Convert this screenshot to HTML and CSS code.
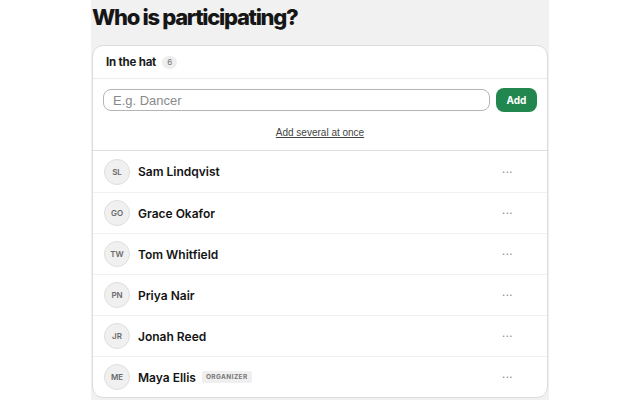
FILE: index.html
```html
<!DOCTYPE html>
<html>
<head>
<meta charset="utf-8">
<link rel="stylesheet" href="styles.css">
</head>
<body>
<main class="page">
  <h1 class="title">Who is participating?</h1>
  <section class="card">
    <header class="card-head">
      <span class="card-title">In the hat</span>
      <span class="count">6</span>
    </header>
    <div class="entry">
      <div class="entry-row">
        <input class="field" type="text" placeholder="E.g. Dancer">
        <button class="add">Add</button>
      </div>
      <a class="several" href="#">Add several at once</a>
    </div>
    <ul class="list">
      <li class="person"><span class="avatar">SL</span><span class="name">Sam Lindqvist</span><span class="more">···</span></li>
      <li class="person"><span class="avatar">GO</span><span class="name">Grace Okafor</span><span class="more">···</span></li>
      <li class="person"><span class="avatar">TW</span><span class="name">Tom Whitfield</span><span class="more">···</span></li>
      <li class="person"><span class="avatar">PN</span><span class="name">Priya Nair</span><span class="more">···</span></li>
      <li class="person"><span class="avatar">JR</span><span class="name">Jonah Reed</span><span class="more">···</span></li>
      <li class="person"><span class="avatar">ME</span><span class="name">Maya Ellis</span><span class="tag">ORGANIZER</span><span class="more">···</span></li>
    </ul>
  </section>
</main>
</body>
</html>
```
FILE: styles.css
```css
html, body {
  margin: 0;
  padding: 0;
  background: #ffffff;
  height: 400px;
  overflow: hidden;
}
.page {
  width: 458px;
  margin: 0 auto;
  background: #f1f1f1;
  min-height: 400px;
  padding-top: 1px;
  font-family: "Inter", "Liberation Sans", sans-serif;
}
.title {
  margin: 2px 0 0 1px;
  font-size: 22px;
  line-height: 28px;
  font-weight: 800;
  letter-spacing: -1.3px;
  color: #161616;
}
.card {
  margin: 14px 1px 0 1px;
  background: #fff;
  border: 1px solid #dcdcdc;
  border-radius: 11px;
  overflow: hidden;
}
.card-head {
  display: flex;
  align-items: center;
  gap: 6px;
  height: 32px;
  padding: 0 13px;
  border-bottom: 1px solid #ececec;
}
.card-title {
  font-size: 11.5px;
  font-weight: 700;
  color: #1a1a1a;
  letter-spacing: -0.2px;
}
.count {
  font-size: 8px;
  color: #777;
  background: #eeeeee;
  border-radius: 7px;
  padding: 1px 5px;
  line-height: 11px;
}
.entry {
  padding: 9px 10px 0 10px;
  border-bottom: 1px solid #dedede;
  display: flex;
  flex-direction: column;
  align-items: stretch;
}
.entry-row {
  display: flex;
  gap: 6px;
  align-items: center;
}
.field {
  flex: 1;
  height: 22px;
  box-sizing: border-box;
  border: 1.5px solid #b4b4b4;
  border-radius: 8px;
  padding: 0 9px;
  font-family: "Liberation Sans", Arial, sans-serif;
  font-size: 13px;
  color: #333;
  outline: none;
}
.field::placeholder {
  color: #8a8a8a;
}
.add {
  width: 41px;
  height: 24px;
  border: none;
  border-radius: 8px;
  background: #22874e;
  color: #fff;
  font-family: "Inter", "Liberation Sans", sans-serif;
  font-weight: 700;
  font-size: 10px;
  padding: 0;
}
.several {
  align-self: center;
  margin: 14px 0 11px 0;
  font-family: "Liberation Sans", Arial, sans-serif;
  font-size: 10px;
  color: #444;
  text-decoration: underline;
  line-height: 13px;
}
.list {
  list-style: none;
  margin: 0;
  padding: 0;
}
.person {
  box-sizing: border-box;
  display: flex;
  align-items: center;
  height: 41px;
  padding: 0 11px;
  border-top: 1px solid #f1f1f1;
}
.person:first-child {
  border-top: none;
}
.avatar {
  width: 24px;
  height: 24px;
  border-radius: 50%;
  background: #f0f0f0;
  border: 1px solid #dedede;
  display: flex;
  align-items: center;
  justify-content: center;
  font-size: 8px;
  font-weight: 600;
  color: #6a6a6a;
  flex: none;
}
.name {
  margin-left: 8px;
  font-size: 12px;
  font-weight: 600;
  color: #141414;
}
.tag {
  margin-left: 6px;
  font-size: 6.5px;
  font-weight: 700;
  letter-spacing: 0.4px;
  color: #777;
  background: #efefef;
  border-radius: 2px;
  padding: 2px 4px;
}
.more {
  margin-left: auto;
  margin-right: 23px;
  color: #8a8a8a;
  font-size: 11px;
  letter-spacing: 0.5px;
}
```
